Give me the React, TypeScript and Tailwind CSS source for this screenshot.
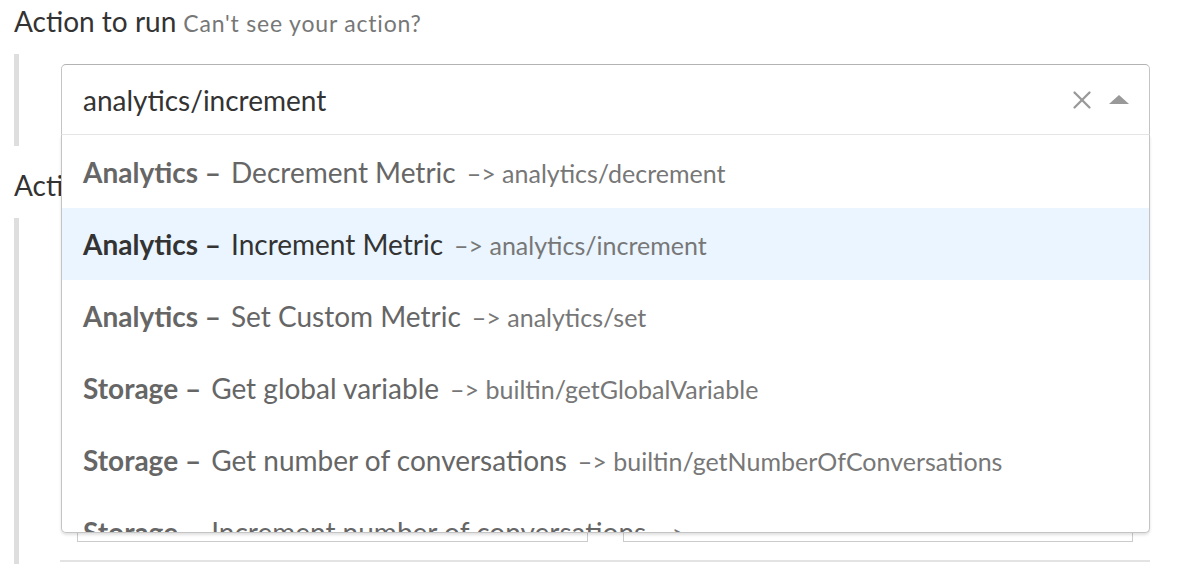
import { X } from 'lucide-react'

interface ActionOption {
  category: string
  label: string
  name: string
}

const OPTIONS: ActionOption[] = [
  { category: 'Analytics', label: 'Decrement Metric', name: 'analytics/decrement' },
  { category: 'Analytics', label: 'Increment Metric', name: 'analytics/increment' },
  { category: 'Analytics', label: 'Set Custom Metric', name: 'analytics/set' },
  { category: 'Storage', label: 'Get global variable', name: 'builtin/getGlobalVariable' },
  { category: 'Storage', label: 'Get number of conversations', name: 'builtin/getNumberOfConversations' },
  { category: 'Storage', label: 'Increment number of conversations', name: 'builtin/incrementNumberOfConversations' },
]

const SELECTED = 'analytics/increment'

// Rows wrap like the real menu: a long action name drops to its own line.
function OptionRow({ option }: { option: ActionOption }) {
  const active = option.name === SELECTED
  return (
    <div
      className={`shrink-0 py-[18px] pl-[21px] pr-[20px] text-[28px] leading-[36px] ${
        active ? 'bg-[#ebf5ff] text-[#333]' : 'text-[#666]'
      }`}
    >
      <span className="font-bold">{option.category} –</span>
      <span className="ml-[10px]">{option.label}</span>
      <span className="ml-[11px] text-[25px] leading-[30px] text-[#777]">–&gt; {option.name}</span>
    </div>
  )
}

export default function App() {
  return (
    <div className="h-[564px] w-[1178px] overflow-hidden bg-white pl-[14px] pr-[28px] pt-[4px] font-[Lato,sans-serif] text-[#333]">
      {/* Field 1 — action select, menu open */}
      <div className="flex h-[34px] items-baseline whitespace-nowrap leading-[34px]">
        <span className="text-[28px]">Action to run</span>
        <span className="ml-[7px] text-[23px] tracking-[0.8px] text-[#777]">Can't see your action?</span>
      </div>

      <div className="mt-[16px] border-l-[5px] border-[#dedede] pb-[11px] pl-[42px] pt-[10px]">
        <div className="relative z-10">
          <div className="flex h-[71px] items-center rounded-t-[5px] border border-[#c4c4c4] border-t-[#b3b3b3] border-b-[#e6e6e6] pl-[21px] pr-[20px]">
            <span className="flex-1 text-[28px] text-[#333]">{SELECTED}</span>
            <X className="h-[30px] w-[30px] text-[#999]" strokeWidth={1.8} />
            <span className="ml-[12px] h-0 w-0 border-x-[10px] border-b-[9px] border-x-transparent border-b-[#999]" />
          </div>

          <div className="absolute left-0 right-0 top-full flex h-[398px] flex-col overflow-hidden rounded-b-[5px] border-x border-b border-[#c4c4c4] bg-white pt-px shadow-[0_2px_3px_rgba(0,0,0,0.12)]">
            {OPTIONS.map(o => (
              <OptionRow key={o.name} option={o} />
            ))}
          </div>
        </div>
      </div>

      {/* Field 2 — mostly hidden under the menu */}
      <p className="mt-[22px] h-[34px] text-[28px] leading-[34px]">Action parameters</p>

      <div className="mt-[16px] h-[400px] border-l-[5px] border-[#dedede] pl-[41px] pt-[272px]">
        <div className="flex gap-[35px] pl-[17px] pr-[17px]">
          <div className="h-[52px] flex-1 border border-[#ccc]" />
          <div className="h-[52px] flex-1 border border-[#ccc]" />
        </div>
        <div className="mt-[18px] h-[2px] bg-[#e3e3e3]" />
      </div>
    </div>
  )
}
